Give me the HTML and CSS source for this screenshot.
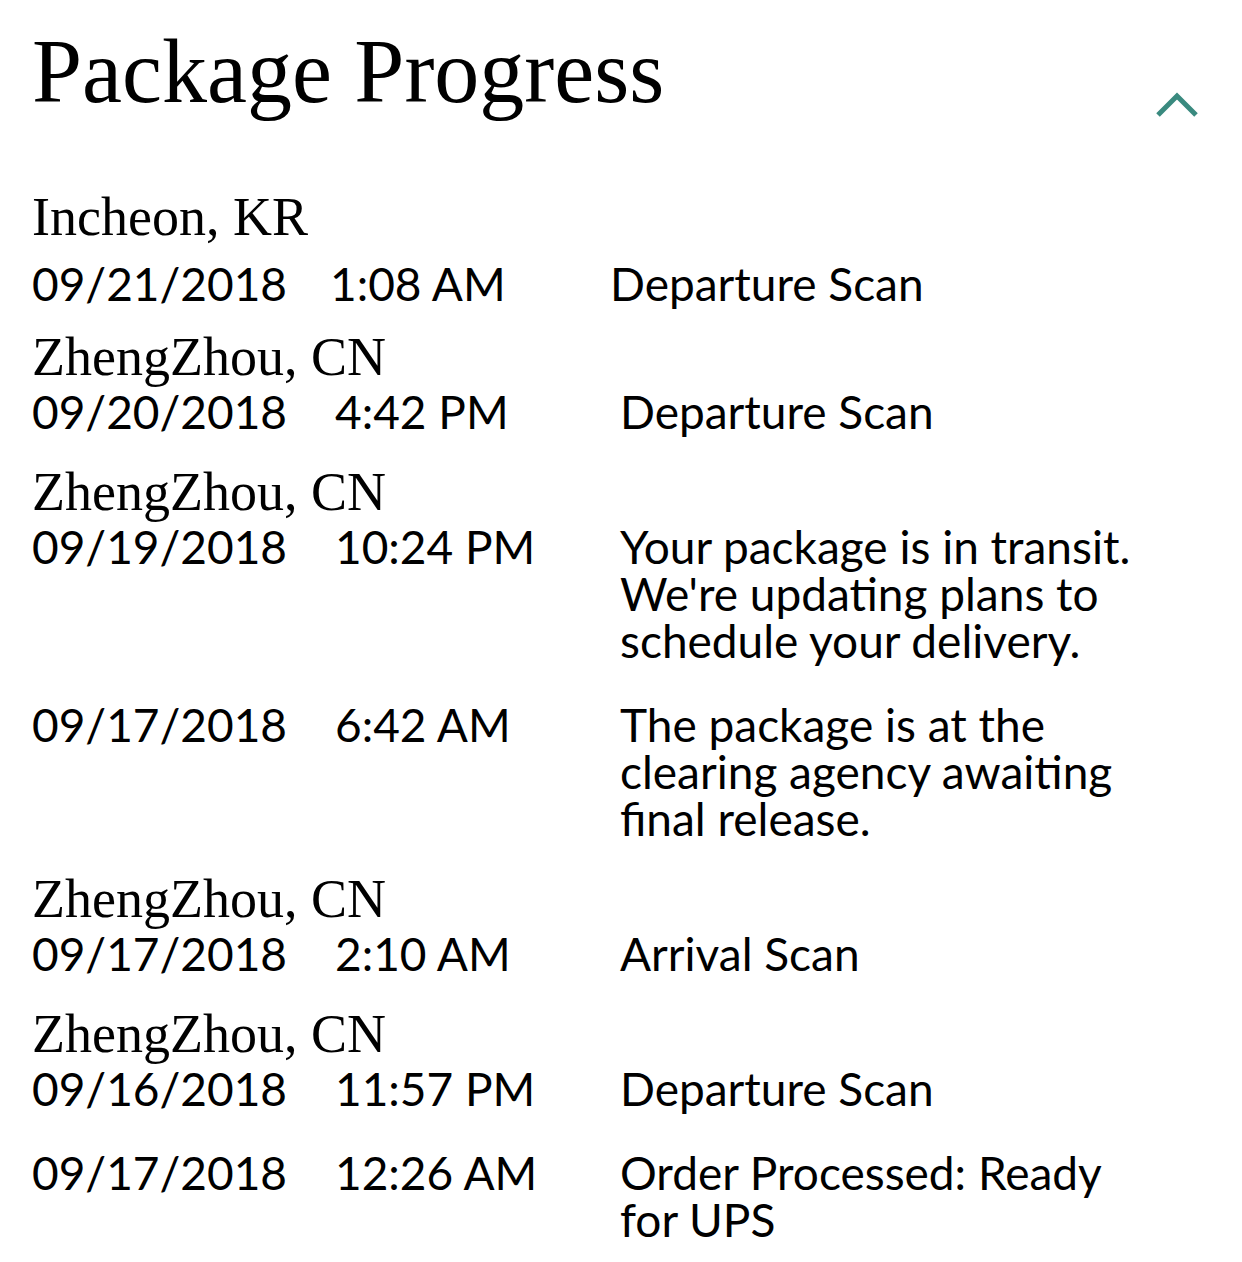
FILE: index.html
```html
<!DOCTYPE html>
<html>
<head>
<meta charset="utf-8">
<link rel="stylesheet" href="styles.css">
</head>
<body>
<div class="panel">
  <div class="header">
    <h1 class="title">Package Progress</h1>
    <svg class="chevron" width="44" height="26" viewBox="0 0 44 26"><path d="M3 23 L22 4 L41 23" fill="none" stroke="#3a8a7f" stroke-width="5"/></svg>
  </div>
  <div class="group first">
    <div class="loc">Incheon, KR</div>
    <div class="row wide"><span class="date">09/21/2018</span><span class="time">1:08 AM</span><span class="status">Departure Scan</span></div>
  </div>
  <div class="group">
    <div class="loc">ZhengZhou, CN</div>
    <div class="row"><span class="date">09/20/2018</span><span class="time">4:42 PM</span><span class="status">Departure Scan</span></div>
  </div>
  <div class="group">
    <div class="loc">ZhengZhou, CN</div>
    <div class="row"><span class="date">09/19/2018</span><span class="time">10:24 PM</span><span class="status">Your package is in transit. We're updating plans to schedule your delivery.</span></div>
    <div class="row"><span class="date">09/17/2018</span><span class="time">6:42 AM</span><span class="status">The package is at the clearing agency awaiting final release.</span></div>
  </div>
  <div class="group">
    <div class="loc">ZhengZhou, CN</div>
    <div class="row"><span class="date">09/17/2018</span><span class="time">2:10 AM</span><span class="status">Arrival Scan</span></div>
  </div>
  <div class="group">
    <div class="loc">ZhengZhou, CN</div>
    <div class="row"><span class="date">09/16/2018</span><span class="time">11:57 PM</span><span class="status">Departure Scan</span></div>
    <div class="row"><span class="date">09/17/2018</span><span class="time">12:26 AM</span><span class="status">Order Processed: Ready for UPS</span></div>
  </div>
</div>
</body>
</html>
```

FILE: styles.css
```css
html, body {
  margin: 0;
  padding: 0;
  background: #ffffff;
  color: #000000;
}
.panel {
  padding: 0 32px 0 32px;
}
.header {
  display: flex;
  justify-content: space-between;
  align-items: flex-start;
  height: 186px;
}
.title {
  margin: 0;
  padding-top: 22px;
  font-family: "Liberation Serif", serif;
  font-weight: normal;
  font-size: 90px;
  line-height: 100px;
  letter-spacing: 0;
}
.chevron {
  margin-top: 92px;
  margin-right: 11px;
}
.group {
  margin-bottom: 26px;
}
.group.first {
  margin-bottom: 19px;
}
.loc {
  font-family: "Liberation Serif", serif;
  font-size: 54px;
  line-height: 62px;
}
.row {
  display: grid;
  grid-template-columns: 303px 285px 1fr;
  font-family: "Lato", sans-serif;
  font-size: 46px;
  line-height: 47px;
  margin-bottom: 37px;
}
.row:last-child {
  margin-bottom: 0;
}
.row.wide {
  grid-template-columns: 298px 280px 1fr;
  margin-top: 12px;
}
.status {
  max-width: 540px;
}
```
